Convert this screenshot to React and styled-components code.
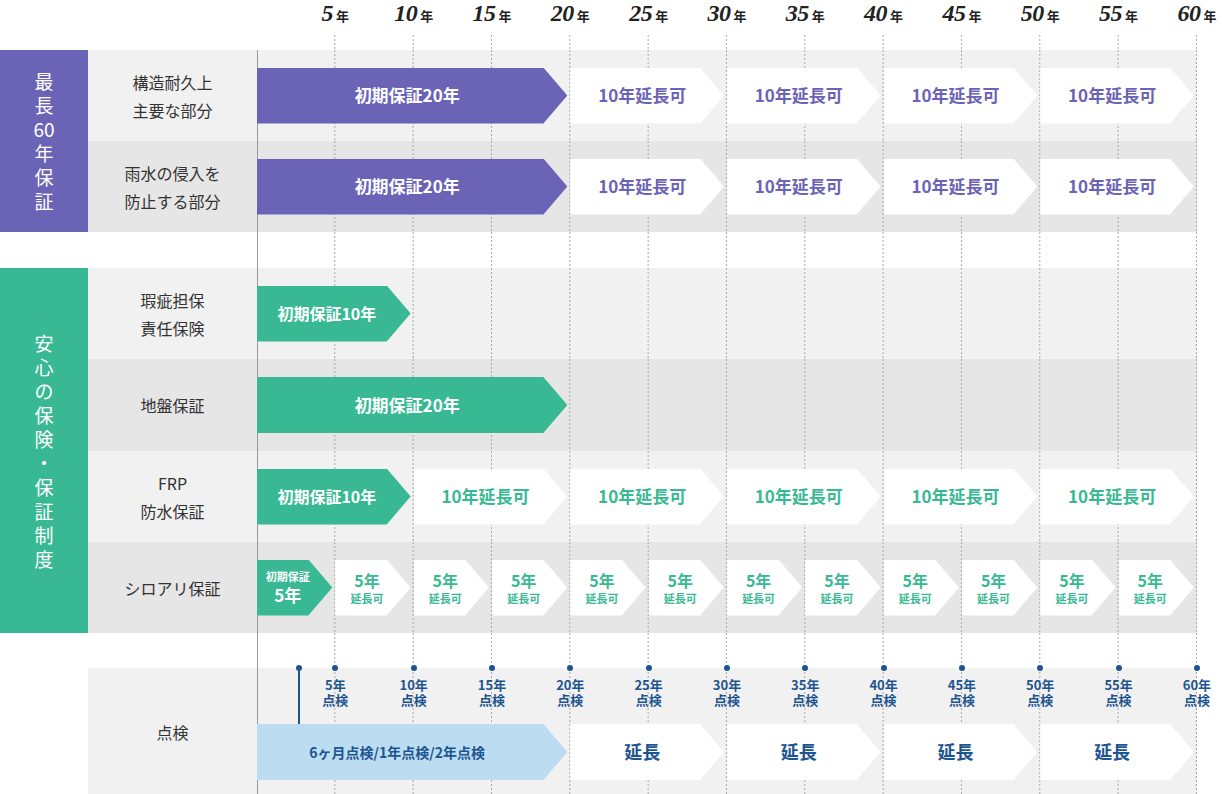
import React from "react";
import styled, { createGlobalStyle } from "styled-components";

const Y = 940 / 60;
const PURPLE = "#6a63b6";
const GREEN = "#38b993";
const BLUE = "#1d5590";

const Global = createGlobalStyle`
  html, body { margin: 0; padding: 0; background: #fff; }
  body { font-family: "Noto Sans CJK JP", "Noto Sans", sans-serif; width: 1222px; overflow: hidden; }
`;

const Page = styled.div`
  width: 1222px;
  height: 794px;
  overflow: hidden;
`;

const Track = styled.div`
  position: relative;
  width: 940px;
  flex: none;
  display: flex;
  align-items: center;
  ${(p) => (p.$rule ? "box-shadow: inset 1px 0 #9a9a9a;" : "")}
  &::before {
    content: "";
    position: absolute;
    inset: 0;
    background-image: linear-gradient(to right, transparent calc(100% - 1px), #a8a8a8 calc(100% - 1px));
    background-size: 78.333px 100%;
    -webkit-mask-image: repeating-linear-gradient(to bottom, #000 0 2px, transparent 2px 4px);
    mask-image: repeating-linear-gradient(to bottom, #000 0 2px, transparent 2px 4px);
    z-index: 0;
  }
`;

const HeaderRow = styled.div`
  display: flex;
  height: 35px;
  padding-left: 257px;
`;
const HeadCell = styled.div`
  width: 78.333px;
  flex: none;
  display: flex;
  justify-content: flex-end;
`;
const HeadLabel = styled.div`
  width: 60px;
  margin-right: -30px;
  display: flex;
  justify-content: center;
  align-items: baseline;
  padding-top: 0px;
  white-space: nowrap;
  color: #222;
  b {
    font-family: "Liberation Serif", serif;
    font-style: italic;
    font-weight: 700;
    font-size: 24px;
    letter-spacing: -0.5px;
  }
  span {
    font-size: 13px;
    font-weight: 700;
    margin-left: 3px;
  }
`;

const Spacer = styled.div`
  display: flex;
  height: ${(p) => p.$h}px;
  padding-left: 257px;
`;

const Group = styled.div`
  display: flex;
`;
const GroupLabel = styled.div`
  width: 88px;
  flex: none;
  background: ${(p) => p.$color};
  color: #fff;
  font-size: 19px;
  line-height: 24px;
  display: flex;
  flex-direction: column;
  align-items: center;
  justify-content: center;
  text-align: center;
`;
const Blank = styled.div`
  width: 88px;
  flex: none;
`;
const Rows = styled.div`
  display: flex;
  flex-direction: column;
`;
const Row = styled.div`
  display: flex;
  height: ${(p) => p.$h || 91}px;
  background: ${(p) => (p.$dark ? "#e6e6e6" : "#f1f1f1")};
`;
const RowLabel = styled.div`
  width: 169px;
  flex: none;
  display: flex;
  align-items: center;
  justify-content: center;
  text-align: center;
  font-size: 16px;
  line-height: 28px;
  color: #333;
`;

const Seg = styled.div`
  position: relative;
  z-index: 1;
  flex: none;
  width: ${(p) => p.$y * Y - 3}px;
  margin-right: 3px;
  height: 56px;
  background: ${(p) => p.$bg};
  color: ${(p) => p.$fg};
  clip-path: polygon(0 0, calc(100% - 24px) 0, 100% 50%, calc(100% - 24px) 100%, 0 100%);
  display: flex;
  flex-direction: column;
  align-items: center;
  justify-content: center;
  padding-right: ${(p) => p.$pr ?? 10}px;
  box-sizing: border-box;
  font-weight: 700;
  font-size: ${(p) => p.$fs || 17}px;
  line-height: 1.3;
  white-space: nowrap;
`;
const Small = styled.span`
  font-size: ${(p) => p.$fs}px;
  line-height: 1.3;
`;

const Marks = styled.div`
  position: relative;
  z-index: 1;
  display: flex;
  width: 940px;
`;
const MarkCell = styled.div`
  width: 78.333px;
  flex: none;
  display: flex;
  justify-content: flex-end;
`;
const Mark = styled.div`
  width: 60px;
  margin-right: -30px;
  display: flex;
  flex-direction: column;
  align-items: center;
  color: ${BLUE};
  font-size: 13px;
  font-weight: 700;
  line-height: 15px;
  &::before {
    content: "";
    width: 6px;
    height: 6px;
    border-radius: 50%;
    background: ${BLUE};
    margin-top: -3px;
    margin-bottom: 6px;
  }
`;
const InspectTrack = styled(Track)`
  flex-direction: column;
  align-items: flex-start;
  justify-content: space-between;
  padding-bottom: 15px;
  box-sizing: border-box;
`;
const BarRow = styled.div`
  display: flex;
`;
const HalfYear = styled.div`
  position: absolute;
  z-index: 2;
  left: 39px;
  top: -3px;
  width: 6px;
  height: 6px;
  border-radius: 50%;
  background: ${BLUE};
  &::after {
    content: "";
    position: absolute;
    left: 2px;
    top: 3px;
    width: 2px;
    height: 56px;
    background: ${BLUE};
  }
`;

const years = [5, 10, 15, 20, 25, 30, 35, 40, 45, 50, 55, 60];

function Ext({ color, n = 4 }) {
  return Array.from({ length: n }, (_, i) => (
    <Seg key={i} $y={10} $bg="#fff" $fg={color}>10年延長可</Seg>
  ));
}

export default function App() {
  return (
    <Page>
      <Global />
      <HeaderRow>
        {years.map((y) => (
          <HeadCell key={y}>
            <HeadLabel><b>{y}</b><span>年</span></HeadLabel>
          </HeadCell>
        ))}
      </HeaderRow>
      <Spacer $h={15}><Track /></Spacer>
      <Group>
        <GroupLabel $color={PURPLE}>
          <div>最</div><div>長</div><div>60</div><div>年</div><div>保</div><div>証</div>
        </GroupLabel>
        <Rows>
          <Row>
            <RowLabel>構造耐久上<br />主要な部分</RowLabel>
            <Track $rule>
              <Seg $y={20} $bg={PURPLE} $fg="#fff">初期保証20年</Seg>
              <Ext color={PURPLE} />
            </Track>
          </Row>
          <Row $dark>
            <RowLabel>雨水の侵入を<br />防止する部分</RowLabel>
            <Track $rule>
              <Seg $y={20} $bg={PURPLE} $fg="#fff">初期保証20年</Seg>
              <Ext color={PURPLE} />
            </Track>
          </Row>
        </Rows>
      </Group>
      <Spacer $h={36}><Track $rule /></Spacer>
      <Group>
        <GroupLabel $color={GREEN}>
          {"安心の保険・保証制度".split("").map((c, i) => <div key={i}>{c}</div>)}
        </GroupLabel>
        <Rows>
          <Row>
            <RowLabel>瑕疵担保<br />責任保険</RowLabel>
            <Track $rule>
              <Seg $y={10} $bg={GREEN} $fg="#fff" $fs={16} $pr={14}>初期保証10年</Seg>
            </Track>
          </Row>
          <Row $dark $h={92}>
            <RowLabel>地盤保証</RowLabel>
            <Track $rule>
              <Seg $y={20} $bg={GREEN} $fg="#fff">初期保証20年</Seg>
            </Track>
          </Row>
          <Row>
            <RowLabel>FRP<br />防水保証</RowLabel>
            <Track $rule>
              <Seg $y={10} $bg={GREEN} $fg="#fff" $fs={16} $pr={14}>初期保証10年</Seg>
              <Ext color={GREEN} n={5} />
            </Track>
          </Row>
          <Row $dark>
            <RowLabel>シロアリ保証</RowLabel>
            <Track $rule>
              <Seg $y={5} $bg={GREEN} $fg="#fff" $pr={14}>
                <Small $fs={11}>初期保証</Small>
                <span>5年</span>
              </Seg>
              {Array.from({ length: 11 }, (_, i) => (
                <Seg key={i} $y={5} $bg="#fff" $fg={GREEN} $fs={16} $pr={12}>
                  <span>5年</span>
                  <Small $fs={11}>延長可</Small>
                </Seg>
              ))}
            </Track>
          </Row>
        </Rows>
      </Group>
      <Spacer $h={35}><Track $rule /></Spacer>
      <Group>
        <Blank />
        <Row $h={127}>
          <RowLabel>点検</RowLabel>
          <InspectTrack $rule>
            <HalfYear />
            <Marks>
              {years.map((y) => (
                <MarkCell key={y}>
                  <Mark><span>{y}年</span><span>点検</span></Mark>
                </MarkCell>
              ))}
            </Marks>
            <BarRow>
              <Seg $y={20} $bg="#bcdcf1" $fg={BLUE} $fs={14} $pr={30}>6ヶ月点検/1年点検/2年点検</Seg>
              {[0, 1, 2, 3].map((i) => (
                <Seg key={i} $y={10} $bg="#fff" $fg={BLUE} $fs={18}>延長</Seg>
              ))}
            </BarRow>
          </InspectTrack>
        </Row>
      </Group>
    </Page>
  );
}
